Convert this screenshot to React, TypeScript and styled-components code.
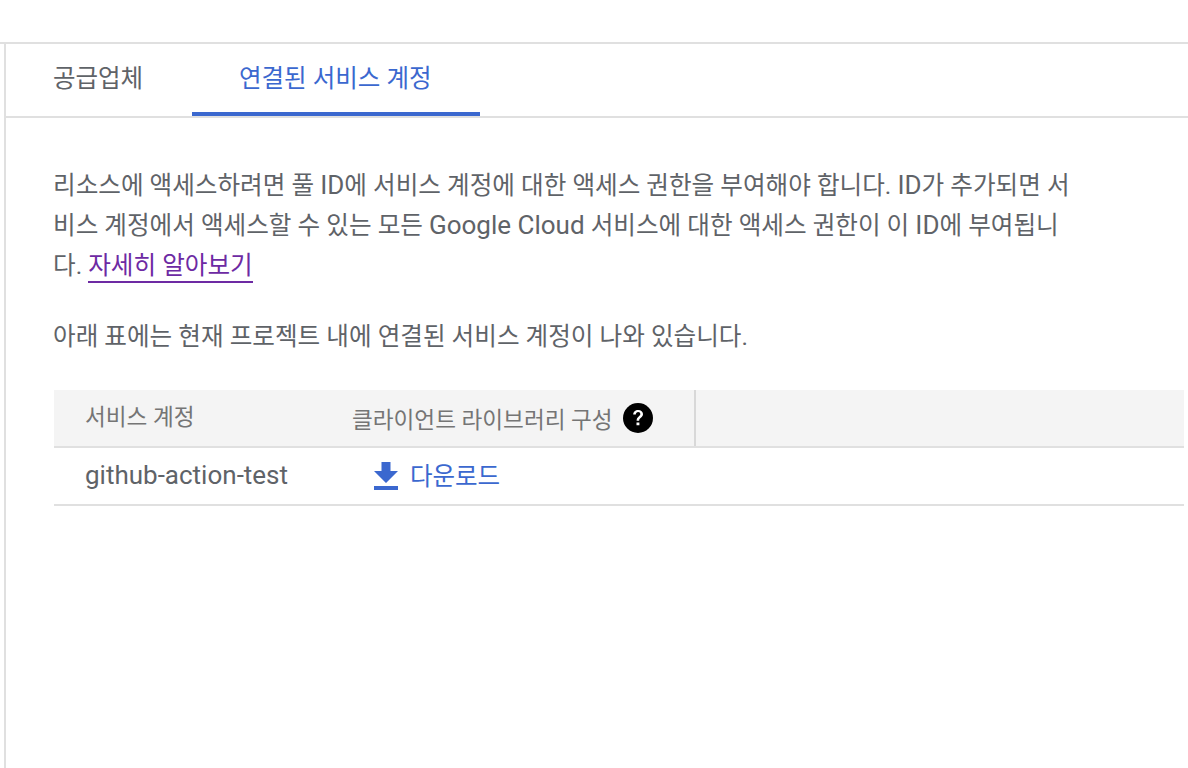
import React from 'react';
import styled, {createGlobalStyle} from "styled-components";

const GlobalStyle = createGlobalStyle`
  html, body {
    margin: 0;
    padding: 0;
    background: #fff;
  }
  body {
    font-family: Roboto, "Noto Sans CJK KR", sans-serif;
    color: #5f6368;
    overflow: hidden;
  }
`

function App() {
    return (
        <Page>
            <GlobalStyle/>
            <Panel>
                <Tabs>
                    <Tab>공급업체</Tab>
                    <Tab $active>연결된 서비스 계정</Tab>
                </Tabs>
                <Content>
                    <Paragraph>
                        리소스에 액세스하려면 풀 <Latin>ID</Latin>에 서비스 계정에 대한 액세스 권한을 부여해야 합니다. <Latin>ID</Latin>가 추가되면 서비스 계정에서 액세스할 수 있는 모든 <Latin>Google Cloud</Latin> 서비스에 대한 액세스 권한이 이 <Latin>ID</Latin>에 부여됩니다. <LearnMore href="#">자세히 알아보기</LearnMore>
                    </Paragraph>
                    <Note>아래 표에는 현재 프로젝트 내에 연결된 서비스 계정이 나와 있습니다.</Note>
                    <Table>
                        <HeadRow>
                            <AccountHead>서비스 계정</AccountHead>
                            <ConfigHead>
                                클라이언트 라이브러리 구성
                                <HelpIcon viewBox="0 0 30 30">
                                    <circle cx="15" cy="15" r="15" fill="#000"/>
                                    <path
                                        d="M10.2 11.6c0-2.8 2.1-4.7 5-4.7 2.8 0 4.8 1.7 4.8 4.1 0 1.7-.8 2.7-2.1 3.8-1.3 1-1.7 1.6-1.7 3h-2.6c0-2.1.6-3.2 2.1-4.4 1.1-.9 1.6-1.5 1.6-2.4 0-1.1-.8-1.9-2.1-1.9-1.4 0-2.3.9-2.4 2.5h-2.6zM13.5 19.4h2.9v2.9h-2.9z"
                                        fill="#fff"/>
                                </HelpIcon>
                            </ConfigHead>
                            <EmptyHead/>
                        </HeadRow>
                        <BodyRow>
                            <AccountCell>github-action-test</AccountCell>
                            <DownloadCell>
                                <DownloadIcon viewBox="0 0 24 28">
                                    <path d="M7.5 0h9v9H24L12 21 0 9h7.5zM0 24h24v4H0z" fill="#3b68cf"/>
                                </DownloadIcon>
                                다운로드
                            </DownloadCell>
                        </BodyRow>
                    </Table>
                </Content>
            </Panel>
        </Page>
    )
}

export default App;

const Page = styled.div`
  height: 768px;
  box-sizing: border-box;
  padding-top: 42px;
  overflow: hidden;
`
const Panel = styled.div`
  height: 726px;
  box-sizing: border-box;
  border-top: 2px solid #e0e0e0;
  display: flex;
  flex-direction: column;
  &::before {
    content: "";
    position: absolute;
    left: 4px;
    top: 44px;
    bottom: 0;
    width: 2px;
    background: #e0e0e0;
  }
`
const Tabs = styled.div`
  display: flex;
  height: 72px;
  margin-left: 6px;
  border-bottom: 2px solid #e0e0e0;
`
const Tab = styled.div<{$active?: boolean}>`
  box-sizing: border-box;
  height: 72px;
  width: ${props => props.$active ? "288px" : "186px"};
  padding-left: 47px;
  font-size: 24.5px;
  line-height: 70px;
  color: ${props => props.$active ? "#3b68cf" : "#5f6368"};
  border-bottom: 4px solid ${props => props.$active ? "#3b68cf" : "transparent"};
`
const Content = styled.div`
  padding: 48px 4px 0 53px;
`
const Paragraph = styled.p`
  margin: 0;
  max-width: 1024px;
  font-size: 24.6px;
  line-height: 40px;
  color: #5f6368;
`
const Latin = styled.span`
  font-size: 26px;
  line-height: 1;
`
const LearnMore = styled.a`
  color: #6d2aa3;
  text-decoration: none;
  padding-bottom: 1px;
  border-bottom: 2px solid #6d2aa3;
`
const Note = styled.p`
  margin: 31px 0 0;
  font-size: 24.6px;
  line-height: 40px;
  color: #5f6368;
`
const Table = styled.div`
  margin: 33px 0 0 1px;
`
const HeadRow = styled.div`
  display: flex;
  height: 58px;
  box-sizing: border-box;
  background: #f4f4f4;
  border-bottom: 2px solid #e0e0e0;
  font-size: 22.6px;
  color: #757575;
`
const AccountHead = styled.div`
  width: 298px;
  padding-left: 31px;
  box-sizing: border-box;
  line-height: 56px;
`
const ConfigHead = styled.div`
  width: 344px;
  box-sizing: border-box;
  display: flex;
  align-items: center;
  gap: 10px;
  border-right: 2px solid #d8d8d8;
`
const EmptyHead = styled.div`
  flex: 1;
`
const HelpIcon = styled.svg`
  width: 30px;
  height: 30px;
`
const BodyRow = styled.div`
  display: flex;
  height: 58px;
  box-sizing: border-box;
  border-bottom: 2px solid #e0e0e0;
`
const AccountCell = styled.div`
  width: 298px;
  padding-left: 31px;
  box-sizing: border-box;
  font-size: 26px;
  line-height: 54px;
  color: #5f6368;
`
const DownloadCell = styled.div`
  display: flex;
  align-items: center;
  gap: 12px;
  padding-left: 22px;
  height: 52px;
  font-size: 24.5px;
  color: #3b68cf;
`
const DownloadIcon = styled.svg`
  width: 24px;
  height: 28px;
  margin-top: 4px;
`
